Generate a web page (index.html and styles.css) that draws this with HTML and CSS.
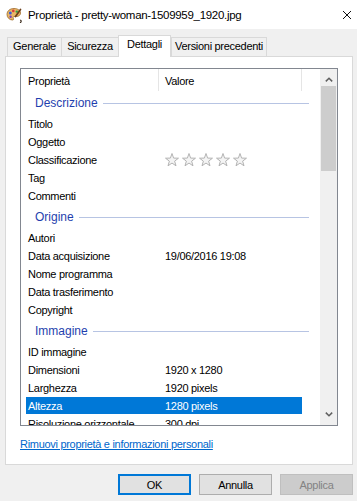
FILE: index.html
```html
<!DOCTYPE html>
<html lang="it">
<head>
<meta charset="utf-8">
<title>Proprietà</title>
<link rel="stylesheet" href="styles.css">
</head>
<body>
<div class="window">
  <header class="titlebar">
    <svg class="app-icon" width="16" height="16" viewBox="0 0 16 16">
      <path d="M8 1.5C3.8 1.5 1 4 1 7.5c0 3 2.5 5.5 5.5 5.5 1.2 0 1.3-1 .8-1.8-.5-.8 0-1.7 1-1.7h2.2c2.3 0 4-1.4 4-3.5C14.5 3.5 11.8 1.5 8 1.5z" fill="#e9b765" stroke="#9c6a2c" stroke-width=".8"/>
      <circle cx="4.3" cy="6" r="1.5" fill="#3b5fd6"/>
      <circle cx="7.3" cy="3.9" r="1.3" fill="#d93a3a"/>
      <circle cx="4.6" cy="9.8" r="1.2" fill="#7a3fb8"/>
      <circle cx="10.8" cy="4.6" r="1.2" fill="#37a24a"/>
      <path d="M14.5 2.5L9.5 9.5" stroke="#6b3e1a" stroke-width="1.7" stroke-linecap="round"/>
      <path d="M14.6 13.2c.8.4.8 1.6-.2 2.4" stroke="#3a2a1a" stroke-width="1.2" fill="none" stroke-linecap="round"/>
    </svg>
    <span class="title">Proprietà - pretty-woman-1509959_1920.jpg</span>
    <svg class="close" width="10" height="10" viewBox="0 0 10 10"><path d="M1 1L9 9M9 1L1 9" stroke="#111" stroke-width="1"/></svg>
  </header>

  <div class="tabs">
    <div class="tab tab-generale">Generale</div>
    <div class="tab tab-sicurezza">Sicurezza</div>
    <div class="tab tab-dettagli active">Dettagli</div>
    <div class="tab tab-versioni">Versioni precedenti</div>
  </div>

  <section class="panel">
    <div class="listview">
      <div class="list-main">
        <div class="list-header">
          <div class="col col-name">Proprietà</div>
          <div class="col col-value">Valore</div>
        </div>

        <div class="group"><span class="group-label">Descrizione</span></div>
        <div class="row"><span class="name">Titolo</span><span class="value"></span></div>
        <div class="row"><span class="name">Oggetto</span><span class="value"></span></div>
        <div class="row"><span class="name">Classificazione</span>
          <span class="value stars">
            <svg class="star" width="14" height="14" viewBox="0 0 14 14"><path d="M7 .5L8.62 5.08 13.47 5.2 9.62 8.15 11 12.8 7 10.05 3 12.8 4.38 8.15 .53 5.2 5.38 5.08Z"/></svg>
            <svg class="star" width="14" height="14" viewBox="0 0 14 14"><path d="M7 .5L8.62 5.08 13.47 5.2 9.62 8.15 11 12.8 7 10.05 3 12.8 4.38 8.15 .53 5.2 5.38 5.08Z"/></svg>
            <svg class="star" width="14" height="14" viewBox="0 0 14 14"><path d="M7 .5L8.62 5.08 13.47 5.2 9.62 8.15 11 12.8 7 10.05 3 12.8 4.38 8.15 .53 5.2 5.38 5.08Z"/></svg>
            <svg class="star" width="14" height="14" viewBox="0 0 14 14"><path d="M7 .5L8.62 5.08 13.47 5.2 9.62 8.15 11 12.8 7 10.05 3 12.8 4.38 8.15 .53 5.2 5.38 5.08Z"/></svg>
            <svg class="star" width="14" height="14" viewBox="0 0 14 14"><path d="M7 .5L8.62 5.08 13.47 5.2 9.62 8.15 11 12.8 7 10.05 3 12.8 4.38 8.15 .53 5.2 5.38 5.08Z"/></svg>
          </span>
        </div>
        <div class="row"><span class="name">Tag</span><span class="value"></span></div>
        <div class="row"><span class="name">Commenti</span><span class="value"></span></div>

        <div class="group"><span class="group-label">Origine</span></div>
        <div class="row"><span class="name">Autori</span><span class="value"></span></div>
        <div class="row"><span class="name">Data acquisizione</span><span class="value">19/06/2016 19:08</span></div>
        <div class="row"><span class="name">Nome programma</span><span class="value"></span></div>
        <div class="row"><span class="name">Data trasferimento</span><span class="value"></span></div>
        <div class="row"><span class="name">Copyright</span><span class="value"></span></div>

        <div class="group"><span class="group-label">Immagine</span></div>
        <div class="row"><span class="name">ID immagine</span><span class="value"></span></div>
        <div class="row"><span class="name">Dimensioni</span><span class="value">1920 x 1280</span></div>
        <div class="row"><span class="name">Larghezza</span><span class="value">1920 pixels</span></div>
        <div class="row selected"><span class="name">Altezza</span><span class="value">1280 pixels</span></div>
        <div class="row"><span class="name">Risoluzione orizzontale</span><span class="value">300 dpi</span></div>
      </div>

      <div class="scrollbar">
        <div class="sb-btn sb-up">
          <svg width="8" height="5" viewBox="0 0 8 5"><path d="M.8 4.4L4 1.2 7.2 4.4" fill="none" stroke="#606060" stroke-width="1.5"/></svg>
        </div>
        <div class="sb-track"><div class="sb-thumb"></div></div>
        <div class="sb-btn sb-down">
          <svg width="8" height="5" viewBox="0 0 8 5"><path d="M.8 .6L4 3.8 7.2 .6" fill="none" stroke="#606060" stroke-width="1.5"/></svg>
        </div>
      </div>
    </div>
    <a class="link" href="#">Rimuovi proprietà e informazioni personali</a>
  </section>

  <div class="buttons">
    <button class="btn btn-default" type="button">OK</button>
    <button class="btn" type="button">Annulla</button>
    <button class="btn btn-disabled" type="button" disabled>Applica</button>
  </div>
</div>
</body>
</html>
```

FILE: styles.css
```css
* { box-sizing: border-box; }

html, body {
  margin: 0;
  padding: 0;
}

body {
  width: 357px;
  height: 501px;
  overflow: hidden;
  background: #f0f0f0;
  font-family: "Liberation Sans", Arial, sans-serif;
  font-size: 11px;
  letter-spacing: -0.3px;
  color: #000;
}

.window {
  width: 357px;
  height: 501px;
}

/* Title bar */
.titlebar {
  height: 29px;
  background: #fff;
  display: flex;
  align-items: center;
  padding-left: 6px;
}

.app-icon {
  flex: none;
  display: block;
}

.title {
  margin-left: 6px;
  font-size: 11.5px;
  white-space: nowrap;
}

.close {
  flex: none;
  margin-left: auto;
  margin-right: 5px;
  display: block;
}

/* Tabs */
.tabs {
  display: flex;
  align-items: flex-end;
  height: 22px;
  margin-top: 6px;
  padding-left: 7px;
  position: relative;
  z-index: 1;
}

.tab {
  height: 19px;
  margin-bottom: 1px;
  background: #f0f0f0;
  border-top: 1px solid #d9d9d9;
  border-left: 1px solid #d9d9d9;
  display: flex;
  align-items: center;
  justify-content: center;
  padding-bottom: 2px;
  white-space: nowrap;
}

.tab-generale { width: 54px; }
.tab-sicurezza { width: 57px; }
.tab-dettagli { width: 53px; }
.tab-versioni {
  width: 96px;
  border-right: 1px solid #d9d9d9;
}

.tab.active {
  height: 22px;
  margin-bottom: 0;
  background: #fff;
  border-right: 1px solid #d9d9d9;
  padding-bottom: 5px;
}

/* Panel */
.panel {
  margin-left: 5px;
  margin-top: -1px;
  width: 348px;
  height: 409px;
  background: #fff;
  border: 1px solid #d9d9d9;
  padding: 11px 14px 0 14px;
}

.listview {
  width: 318px;
  height: 358px;
  border: 1px solid #828790;
  display: flex;
  background: #fff;
}

.list-main {
  flex: 1;
  overflow: hidden;
}

.list-header {
  height: 22px;
  display: flex;
}

.col {
  height: 22px;
  padding-top: 2px;
  display: flex;
  align-items: center;
  border-right: 1px solid #e5e5e5;
}

.col-name {
  width: 138px;
  padding-left: 7px;
}

.col-value {
  width: 143px;
  padding-left: 6px;
}

/* Groups */
.group {
  height: 24px;
  display: flex;
  align-items: center;
  padding-left: 14px;
  padding-right: 11px;
}

.group-label {
  color: #1f3fae;
  font-size: 12px;
  letter-spacing: 0;
}

.group::after {
  content: "";
  flex: 1;
  height: 1px;
  margin-left: 5px;
  background: #b7c4e3;
}

/* Rows */
.row {
  height: 18px;
  width: 276px;
  margin-left: 5px;
  display: flex;
  align-items: center;
  white-space: nowrap;
}

.row .name {
  width: 133px;
  padding-left: 2px;
  flex: none;
}

.row .value {
  padding-left: 6px;
}

.row.selected {
  background: linear-gradient(#0078d7, #0078d7) top left / 100% 17px no-repeat;
  color: #fff;
}

.stars {
  display: flex;
  gap: 3px;
}

.star {
  display: block;
  fill: #f4f4f4;
  stroke: #b3b3b3;
  stroke-width: 1;
  stroke-linejoin: round;
}

/* Scrollbar */
.scrollbar {
  width: 17px;
  flex: none;
  display: flex;
  flex-direction: column;
  background: #f0f0f0;
}

.sb-btn {
  height: 17px;
  flex: none;
  display: flex;
  justify-content: center;
  align-items: center;
}

.sb-btn svg { display: block; }

.sb-up { padding-top: 3px; }
.sb-down { padding-bottom: 5px; }

.sb-track {
  flex: 1;
}

.sb-thumb {
  height: 85px;
  margin: 0 1px;
  background: #cdcdcd;
}

/* Link */
.link {
  display: inline-block;
  margin-top: 11px;
  line-height: 14px;
  color: #0066cc;
  text-decoration: underline;
}

/* Buttons */
.buttons {
  display: flex;
  justify-content: flex-end;
  gap: 8px;
  margin-top: 9px;
  padding-right: 4px;
}

.btn {
  width: 73px;
  height: 21px;
  padding: 0;
  background: #e1e1e1;
  border: 1px solid #adadad;
  font-family: "Liberation Sans", Arial, sans-serif;
  font-size: 11px;
  letter-spacing: -0.3px;
  color: #000;
}

.btn-default {
  border: 2px solid #0078d7;
}

.btn-disabled {
  background: #cccccc;
  border-color: #bfbfbf;
  color: #838383;
}
```
